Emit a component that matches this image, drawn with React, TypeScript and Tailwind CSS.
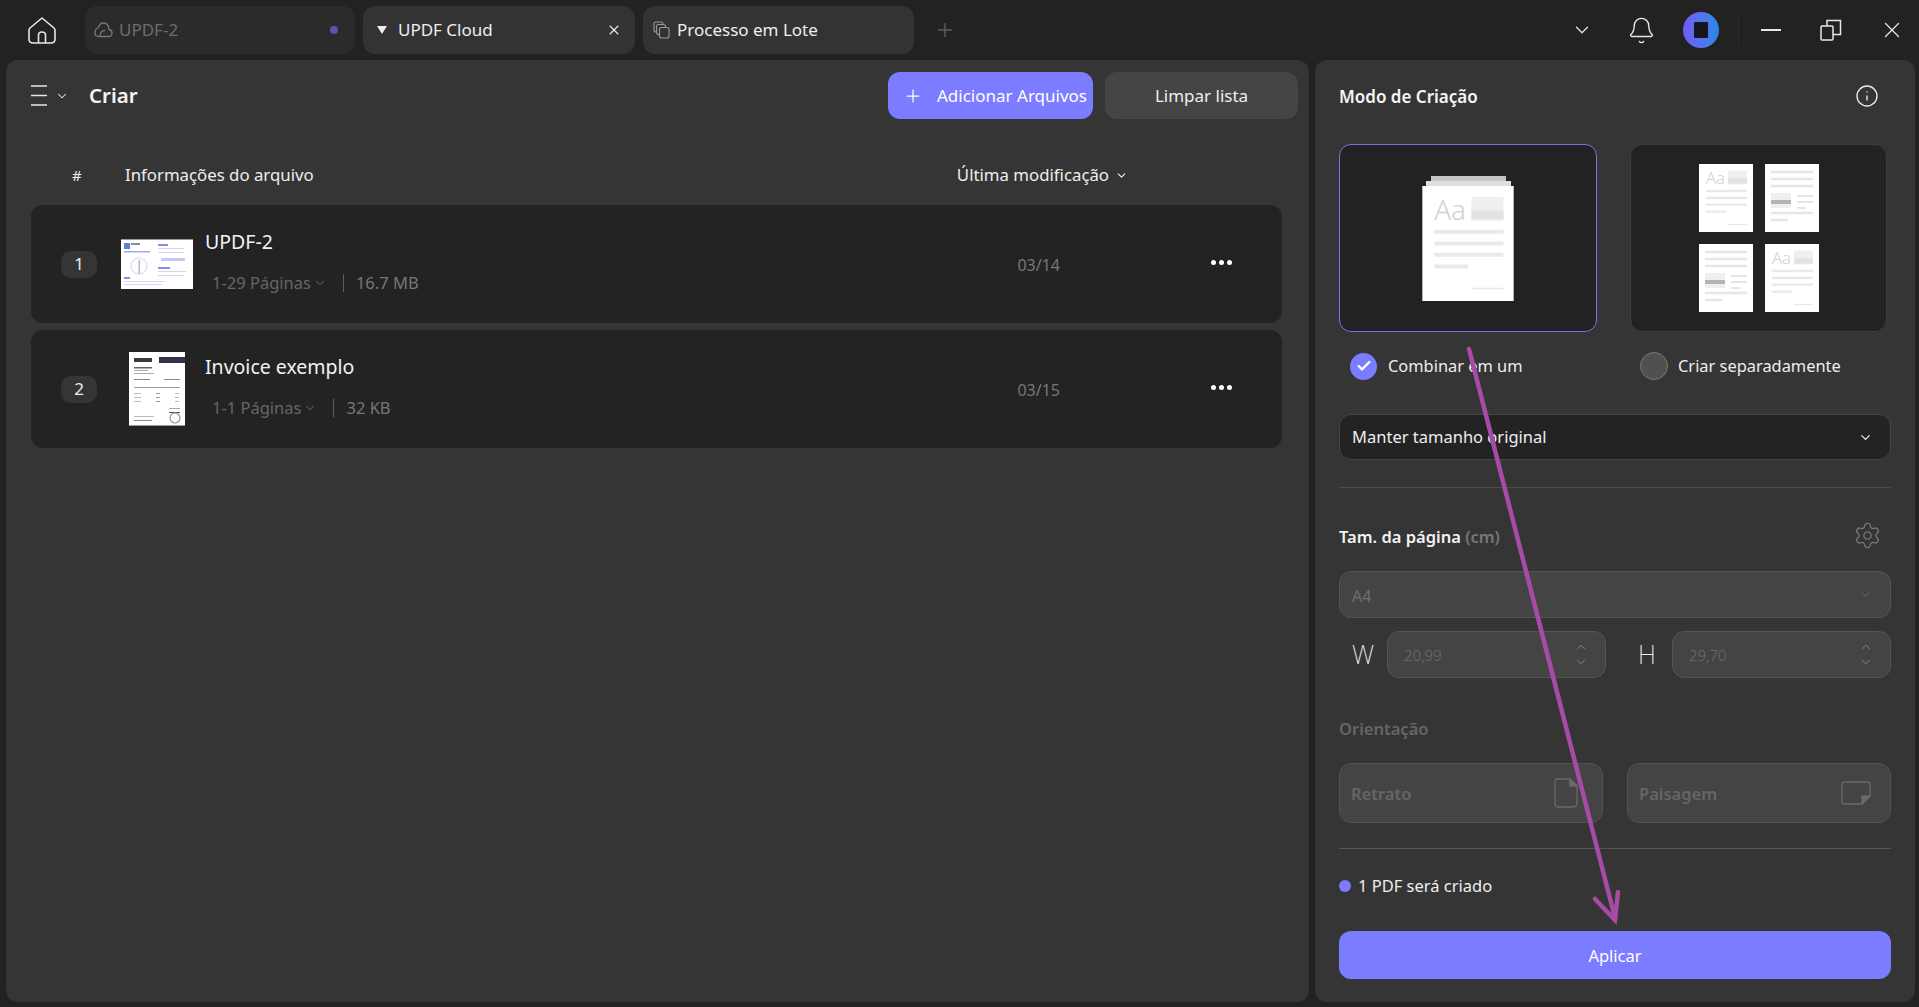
import { Bell, Check, ChevronDown, ChevronUp, Info, Plus, Settings, X } from "lucide-react";

const font = { sans: "font-['Noto_Sans','Open_Sans',sans-serif]" };

const HomeIcon = () => (
  <svg width="30" height="30" viewBox="0 0 30 30" fill="none" stroke="#e8e8e8" strokeWidth="1.6">
    <path d="M15 3 L27 13 Q28 14 28 15.5 V24 Q28 28 24 28 H6 Q2 28 2 24 V15.5 Q2 14 3 13 Z" strokeLinejoin="round" />
    <path d="M11.5 28 V20 Q11.5 17 15 17 Q18.5 17 18.5 20 V28" />
  </svg>
);

const CloudIcon = () => (
  <svg width="19" height="18" viewBox="0 0 19 18" fill="none" stroke="#777" strokeWidth="1.3">
    <path d="M5 15.5 H14.5 Q18 15.5 18 12 Q18 9 15 8.5 Q14.5 2 9.5 2 Q5.5 2 4.5 6.5 Q1 8 1 11.5 Q1 15.5 5 15.5 Z" />
    <path d="M6 15.5 Q6 9.5 11 9.5" />
  </svg>
);

const BatchIcon = () => (
  <svg width="17" height="18" viewBox="0 0 17 18" fill="none" stroke="#9a9a9a" strokeWidth="1.1">
    <rect x="1" y="1" width="9" height="10" rx="2" />
    <rect x="3.5" y="3.5" width="9" height="10" rx="2" fill="#333" />
    <rect x="6.5" y="6.5" width="9.5" height="10.5" rx="2" fill="#333" />
  </svg>
);

const RestoreIcon = () => (
  <svg width="22" height="22" viewBox="0 0 22 22" fill="none" stroke="#e8e8e8" strokeWidth="1.5">
    <rect x="1" y="7" width="12" height="14" rx="1" />
    <path d="M7 7 V1.5 H20.5 V15.5 H13" />
  </svg>
);

const MenuIcon = () => (
  <svg width="17" height="21" viewBox="0 0 17 21" stroke="#e8e8e8" strokeWidth="1.4">
    <path d="M0 1 H16 M0 10.5 H16 M0 20 H16" />
  </svg>
);

const Thumb1 = () => (
  <svg width="72" height="50" viewBox="0 0 72 50" className="shrink-0 blur-[0.4px]">
    <rect width="72" height="50" fill="#fff" />
    <rect y="0" width="72" height="1" fill="#9a9aa5" />
    <rect x="3" y="4" width="6" height="6" fill="#5c7fd8" />
    <rect x="10" y="4" width="9" height="2" fill="#8a8a95" />
    <rect x="3" y="12" width="26" height="1.5" fill="#a9a6f0" />
    <circle cx="18" cy="27" r="8" fill="none" stroke="#e4e4ee" strokeWidth="1.5" />
    <rect x="17.5" y="21" width="1.5" height="14" fill="#b5b5c8" />
    <rect x="3" y="38" width="6" height="2" fill="#8d89e8" />
    <rect x="3" y="42" width="40" height="1" fill="#d5d4f5" />
    <rect x="3" y="45" width="38" height="1" fill="#d5d4f5" />
    <rect x="37" y="5" width="10" height="2" fill="#8d89e8" />
    <rect x="37" y="9" width="26" height="1" fill="#d5d4f5" />
    <rect x="37" y="13" width="26" height="1" fill="#d5d4f5" />
    <rect x="40" y="19" width="24" height="3" fill="#c9c7f3" />
    <rect x="37" y="28" width="12" height="2" fill="#8d89e8" />
    <rect x="37" y="32" width="28" height="1" fill="#d5d4f5" />
    <rect x="37" y="36" width="26" height="1" fill="#d5d4f5" />
  </svg>
);

const Thumb2 = () => (
  <svg width="56" height="74" viewBox="0 0 56 74" className="shrink-0 blur-[0.3px]">
    <rect width="56" height="74" fill="#fff" />
    <rect x="5" y="6" width="18" height="4" fill="#3a3a3a" />
    <rect x="30" y="5" width="26" height="6" fill="#34334a" />
    <rect x="5" y="15" width="18" height="1.5" fill="#666" />
    <rect x="5" y="18" width="14" height="1" fill="#aaa" />
    <rect x="5" y="21" width="20" height="1" fill="#aaa" />
    <rect x="5" y="27" width="16" height="1" fill="#888" />
    <rect x="35" y="27" width="16" height="1" fill="#888" />
    <rect x="5" y="35" width="46" height="1" fill="#999" />
    <rect x="5" y="41" width="7" height="1" fill="#bbb" />
    <rect x="27" y="41" width="4" height="1" fill="#999" />
    <rect x="46" y="41" width="4" height="1" fill="#bbb" />
    <rect x="5" y="45" width="7" height="1" fill="#bbb" />
    <rect x="27" y="45" width="4" height="1" fill="#999" />
    <rect x="46" y="45" width="4" height="1" fill="#bbb" />
    <rect x="5" y="49" width="7" height="1" fill="#bbb" />
    <rect x="27" y="49" width="4" height="1" fill="#999" />
    <rect x="46" y="49" width="4" height="1" fill="#bbb" />
    <rect x="40" y="56" width="11" height="1" fill="#aaa" />
    <rect x="40" y="60" width="11" height="1" fill="#555" />
    <rect x="5" y="64" width="20" height="1" fill="#bbb" />
    <rect x="5" y="68" width="18" height="1" fill="#888" />
    <circle cx="46" cy="66" r="5" fill="none" stroke="#999" strokeWidth="1.2" />
    <rect y="73" width="56" height="1" fill="#9a9aa5" />
  </svg>
);

// the small page drawing used in both mode cards
const PageArt = ({ w, h, flip }: { w: number; h: number; flip?: boolean }) =>
  flip ? (
    <svg width={w} height={h} viewBox="0 0 54 68" className="shrink-0">
      <rect width="54" height="68" fill="#fff" />
      <path d="M6 8 H48 M6 15 H48 M6 22 H48" stroke="#e6e6e6" strokeWidth="2.4" />
      <rect x="6" y="29" width="20" height="15" fill="#efefef" />
      <rect x="6" y="36" width="20" height="4" fill="#b4b4b4" />
      <path d="M32 32 H48 M32 38 H48 M32 44 H41" stroke="#e6e6e6" strokeWidth="2" />
      <path d="M6 49 H48 M6 56 H23" stroke="#e6e6e6" strokeWidth="2.4" />
    </svg>
  ) : (
    <svg width={w} height={h} viewBox="0 0 54 68" className="shrink-0">
      <rect width="54" height="68" fill="#fff" />
      <text x="7" y="20" fontSize="16.5" fontWeight="300" fill="#d2d2d2" fontFamily="'Noto Sans', sans-serif">Aa</text>
      <rect x="29" y="6.5" width="19" height="14" fill="#efefef" />
      <rect x="29" y="14.5" width="19" height="5" fill="#e2e2e2" />
      <path d="M7 27 H48 M7 34 H48 M7 40.6 H48 M7 47.6 H27" stroke="#e9e9e9" strokeWidth="2.4" />
      <path d="M29 60.6 H48" stroke="#e6e6e6" strokeWidth="1" />
    </svg>
  );

const Tab = ({ children, w, dim }: { children: React.ReactNode; w: string; dim?: boolean }) => (
  <div className={`flex h-12 items-center rounded-xl ${w} ${dim ? "bg-[#2b2b2b]" : "bg-[#333333]"}`}>{children}</div>
);

const FileRow = ({
  n, name, pages, size, date, thumb,
}: {
  n: number; name: string; pages: string; size: string; date: string; thumb: React.ReactNode;
}) => (
  <div className="flex h-[118px] items-center rounded-xl bg-[#232324] pl-[30px] pr-[50px]">
    <div className="flex h-[27px] w-9 items-center justify-center rounded-[10px] bg-[#353535] text-[17px] text-[#eeeeee]">{n}</div>
    <div className="ml-3 flex w-24 items-center justify-center">{thumb}</div>
    <div className="mb-[5px] flex flex-1 flex-col">
      <div className="text-[19.5px] leading-[28px] text-[#f2f2f2]">{name}</div>
      <div className="mt-[15px] flex items-center pl-[7px] text-[16.5px] leading-6 text-[#666666]">
        <span>{pages}</span>
        <ChevronDown size={14} className="ml-0.5 mr-[16px] text-[#777777]" strokeWidth={1.6} />
        <span className="h-[18px] w-px bg-[#5c5c5c]" />
        <span className="ml-3 text-[#777777]">{size}</span>
      </div>
    </div>
    <div className="mr-[151px] pt-0.5 text-[16px] text-[#777777]">{date}</div>
    <div className="mb-1 flex gap-[3px]">
      <span className="h-[5px] w-[5px] rounded-full bg-white" />
      <span className="h-[5px] w-[5px] rounded-full bg-white" />
      <span className="h-[5px] w-[5px] rounded-full bg-white" />
    </div>
  </div>
);

const Stepper = ({ value }: { value: string }) => (
  <div className="flex h-[47px] flex-1 items-center justify-between rounded-xl border border-[#545454] bg-[#444444] pl-4 pr-[17px] text-[15px] text-[#6e6e6e]">
    <span className="pt-0.5 font-light">{value}</span>
    <span className="flex flex-col gap-px text-[#8a8a8a]">
      <ChevronUp size={14} strokeWidth={1.6} />
      <ChevronDown size={14} strokeWidth={1.6} />
    </span>
  </div>
);

export default function App() {
  return (
    <div className={`relative flex h-screen flex-col overflow-hidden bg-[#222222] ${font.sans}`}>
      {/* title bar */}
      <div className="flex h-[60px] shrink-0 items-center pl-[27px] pr-[14px]">
        <div className="mr-[28px]"><HomeIcon /></div>
        <div className="flex gap-2">
          <Tab w="w-[270px] pl-[9px] pr-[17px]" dim>
            <CloudIcon />
            <span className="ml-1.5 flex-1 text-[17px] text-[#6d6d6d]">UPDF-2</span>
            <span className="h-2 w-2 rounded-full bg-[#5557a8]" />
          </Tab>
          <Tab w="w-[272px] pl-[14px] pr-[13px]">
            <svg width="10" height="8" viewBox="0 0 10 8" fill="#eeeeee"><path d="M0 0 H10 L5 8 Z" /></svg>
            <span className="ml-[11px] flex-1 text-[17px] text-[#eeeeee]">UPDF Cloud</span>
            <X size={16} color="#eeeeee" strokeWidth={1.6} />
          </Tab>
          <Tab w="w-[271px] pl-[10px]">
            <BatchIcon />
            <span className="ml-[7px] text-[17px] text-[#eeeeee]">Processo em Lote</span>
          </Tab>
        </div>
        <Plus size={22} className="ml-[20px] text-[#5e5e5e]" strokeWidth={1.5} />
        <div className="flex-1" />
        <ChevronDown size={22} color="#e8e8e8" strokeWidth={1.3} />
        <Bell size={29} color="#e8e8e8" strokeWidth={1.15} className="ml-[34px]" />
        <div className="ml-[27px] flex h-9 w-9 items-center justify-center rounded-full bg-gradient-to-r from-[#6f5cf5] to-[#1e88e5]">
          <span className="h-4 w-[14px] rounded-[1px] bg-[#15151d]" />
        </div>
        <div className="ml-[19px] mr-[22px] h-8 w-px bg-[#2b2b2b]" />
        <div className="h-[1.5px] w-5 bg-[#e8e8e8]" />
        <div className="ml-[39px]"><RestoreIcon /></div>
        <X size={26} color="#e8e8e8" strokeWidth={1.2} className="ml-[37px]" />
      </div>

      {/* panels */}
      <div className="flex h-[942px] gap-[6px] pl-[6px] pr-1">
        <div className="flex w-[1303px] flex-col rounded-xl bg-[#353535] pl-[25px] pr-[27px] pt-3">
          <div className="flex h-[47px] items-center">
            <MenuIcon />
            <ChevronDown size={14} color="#e8e8e8" strokeWidth={1.8} className="ml-[7px]" />
            <span className="ml-[20px] flex-1 text-[20.5px] font-semibold text-[#f5f5f5]">Criar</span>
            <button className="flex h-[47px] w-[205px] items-center rounded-xl bg-[#7b7cff] pl-[15px] text-[17px] text-white">
              <Plus size={20} strokeWidth={1.5} />
              <span className="ml-[14px]">Adicionar Arquivos</span>
            </button>
            <button className="ml-3 mr-[-16px] h-[47px] w-[193px] rounded-xl bg-[#454545] text-[17px] text-[#eeeeee]">Limpar lista</button>
          </div>
          <div className="mt-[44px] flex h-6 items-center pl-[41px] pr-[154px] text-[16.8px] text-[#eeeeee]">
            <span className="w-[53px] text-[15px]">#</span>
            <span className="flex-1">Informações do arquivo</span>
            <span>Última modificação</span>
            <ChevronDown size={13} className="ml-1.5" strokeWidth={2} />
          </div>
          <div className="mt-[18px] flex flex-col gap-[7px]">
            <FileRow n={1} name="UPDF-2" pages="1-29 Páginas" size="16.7 MB" date="03/14" thumb={<Thumb1 />} />
            <FileRow n={2} name="Invoice exemplo" pages="1-1 Páginas" size="32 KB" date="03/15" thumb={<Thumb2 />} />
          </div>
        </div>

        <div className="flex w-[600px] flex-col rounded-xl bg-[#353535] pl-6 pr-6 pt-[25px]">
          <div className="flex h-6 items-center justify-between pr-3">
            <span className="text-[17px] font-semibold text-[#f5f5f5]">Modo de Criação</span>
            <Info size={24} color="#e8e8e8" strokeWidth={1.4} className="mb-0.5" />
          </div>
          <div className="mt-[35px] flex justify-between pr-1">
            <div className="relative flex h-[188px] w-[258px] items-center justify-center rounded-xl border border-[#7475e0] bg-[#222224]">
              <div className="flex flex-col items-center">
                <div className="h-[5px] w-[75px] bg-[#c4c4c4]" />
                <div className="h-[5px] w-[85px] bg-[#dedede]" />
                <PageArt w={92} h={115} />
              </div>
            </div>
            <div className="grid h-[188px] w-[257px] grid-cols-[54px_54px] content-center justify-center gap-3 rounded-xl border border-[#3e3e3e] bg-[#222224]">
              <PageArt w={54} h={68} />
              <PageArt w={54} h={68} flip />
              <PageArt w={54} h={68} flip />
              <PageArt w={54} h={68} />
            </div>
          </div>
          <div className="mt-5 flex h-7 items-center text-[16.4px] text-[#eeeeee]">
            <span className="ml-[11px] flex h-[27px] w-[27px] items-center justify-center rounded-full bg-[#7b7cff]">
              <Check size={16} color="#fff" strokeWidth={3.5} />
            </span>
            <span className="ml-[11px] w-[252px]">Combinar em um</span>
            <span className="h-7 w-7 rounded-full border border-[#777777] bg-[#505050]" />
            <span className="ml-[10px]">Criar separadamente</span>
          </div>
          <div className="mt-[34px] flex h-[46px] items-center justify-between rounded-xl border border-[#454545] bg-[#232324] pl-3 pr-[17px] text-[16.5px] text-[#eeeeee]">
            <span className="pt-px">Manter tamanho original</span>
            <ChevronDown size={15} strokeWidth={2} />
          </div>
          <div className="mt-[27px] h-px bg-[#4d4d4d]" />
          <div className="mt-[37px] flex h-6 items-center justify-between pr-[9px]">
            <span className="text-[16.5px] font-semibold text-[#f2f2f2]">
              Tam. da página <span className="text-[#777777]">(cm)</span>
            </span>
            <Settings size={29} color="#777777" strokeWidth={1.1} className="mb-1" />
          </div>
          <div className="mt-[22px] flex h-[47px] items-center justify-between rounded-xl border border-[#545454] bg-[#444444] pl-3 pr-[17px] text-[16px] text-[#6e6e6e]">
            <span className="pt-0.5">A4</span>
            <ChevronDown size={15} strokeWidth={1.5} />
          </div>
          <div className="mt-[13px] flex items-center">
            <span className="w-12 pl-[13px] text-[25px] font-extralight text-[#eeeeee]">W</span>
            <Stepper value="20,99" />
            <span className="w-[66px] pl-[32px] text-[25px] font-extralight text-[#eeeeee]">H</span>
            <Stepper value="29,70" />
          </div>
          <div className="mt-10 h-[22px] text-[16.5px] font-semibold leading-[22px] text-[#666666]">Orientação</div>
          <div className="mt-[23px] grid grid-cols-2 gap-6">
            <div className="flex h-[60px] items-center justify-between rounded-xl border border-[#525252] bg-[#444444] pl-[11px] pr-[24px] text-[16.5px] font-semibold text-[#666666]">
              <span className="pt-0.5">Retrato</span>
              <svg width="24" height="30" viewBox="0 0 24 30" fill="none" stroke="#6a6a6a" strokeWidth="1.3">
                <path d="M3 1 H16 L23 8 V25 Q23 29 19 29 H5 Q1 29 1 25 V4 Q1 1 3 1 Z" />
                <path d="M16 1 L23 8 H16 Z" fill="#6a6a6a" />
              </svg>
            </div>
            <div className="flex h-[60px] items-center justify-between rounded-xl border border-[#525252] bg-[#444444] pl-[11px] pr-[19px] text-[16.5px] font-semibold text-[#666666]">
              <span className="pt-0.5">Paisagem</span>
              <svg width="30" height="24" viewBox="0 0 30 24" fill="none" stroke="#6a6a6a" strokeWidth="1.3">
                <path d="M4 1 H26 Q29 1 29 4 V15 L21 23 H4 Q1 23 1 20 V4 Q1 1 4 1 Z" />
                <path d="M29 15 L21 23 V15 Z" fill="#6a6a6a" />
              </svg>
            </div>
          </div>
          <div className="mt-[25px] h-px bg-[#555555]" />
          <div className="mt-[26px] flex h-[22px] items-center text-[16.5px] text-[#eeeeee]">
            <span className="mr-[7px] h-3 w-3 rounded-full bg-[#7b7cff]" />
            1 PDF será criado
          </div>
          <button className="mt-[34px] h-12 rounded-xl bg-[#7b7cff] pt-[3px] text-[16.5px] text-white">Aplicar</button>
        </div>
      </div>

      {/* hand-drawn annotation arrow over the page */}
      <svg className="pointer-events-none absolute left-0 top-0" width="1919" height="1007" fill="none" stroke="#a64ca6" strokeWidth="4.5" strokeLinecap="round">
        <path d="M1469 349 L1615 918" />
        <path d="M1595 899 L1615 920 L1618 892" />
      </svg>
    </div>
  );
}
